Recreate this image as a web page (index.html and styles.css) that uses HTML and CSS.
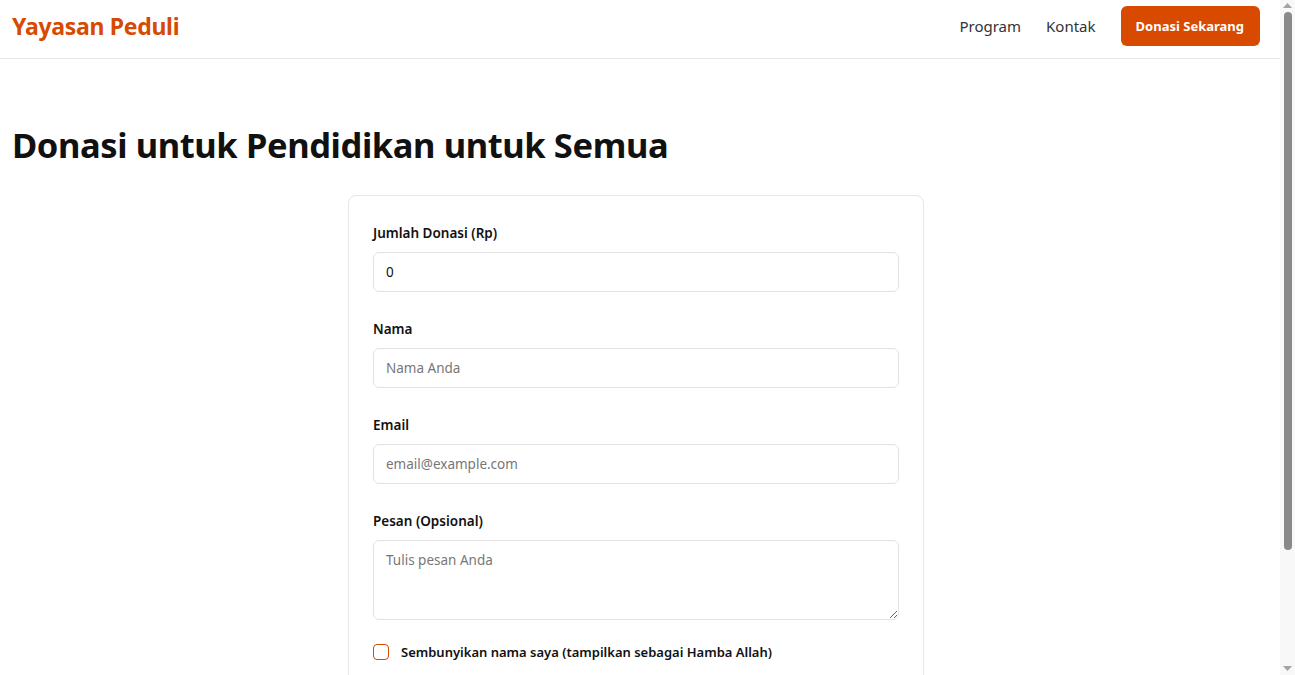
FILE: index.html
```html
<!DOCTYPE html>
<html lang="id">
<head>
<meta charset="utf-8">
<title>Yayasan Peduli - Donasi</title>
<link rel="stylesheet" href="styles.css">
</head>
<body>
<div class="page">
  <header class="site-header">
    <a class="brand" href="#">Yayasan Peduli</a>
    <nav class="nav">
      <a class="nav-link" href="#">Program</a>
      <a class="nav-link" href="#">Kontak</a>
      <a class="btn-primary" href="#">Donasi Sekarang</a>
    </nav>
  </header>
  <main class="main">
    <h1 class="page-title">Donasi untuk Pendidikan untuk Semua</h1>
    <form class="card">
      <div class="field">
        <label class="label" for="amount">Jumlah Donasi (Rp)</label>
        <input class="input" id="amount" type="text" value="0">
      </div>
      <div class="field">
        <label class="label" for="name">Nama</label>
        <input class="input" id="name" type="text" placeholder="Nama Anda">
      </div>
      <div class="field">
        <label class="label" for="email">Email</label>
        <input class="input" id="email" type="email" placeholder="email@example.com">
      </div>
      <div class="field">
        <label class="label" for="msg">Pesan (Opsional)</label>
        <textarea class="input textarea" id="msg" placeholder="Tulis pesan Anda"></textarea>
      </div>
      <label class="check">
        <input type="checkbox" class="checkbox">
        <span>Sembunyikan nama saya (tampilkan sebagai Hamba Allah)</span>
      </label>
    </form>
  </main>
</div>
<div class="scrollbar" aria-hidden="true">
  <svg class="arrow arrow-up" width="9" height="5" viewBox="0 0 9 5"><path d="M0 5 L4.5 0 L9 5 Z" fill="#a3a3a3"/></svg>
  <div class="thumb"></div>
  <svg class="arrow arrow-down" width="9" height="5" viewBox="0 0 9 5"><path d="M0 0 L4.5 5 L9 0 Z" fill="#a3a3a3"/></svg>
</div>
</body>
</html>
```
FILE: styles.css
```css
* { box-sizing: border-box; }
html, body { margin: 0; padding: 0; }
body {
  font-family: "Noto Sans", "Open Sans", sans-serif;
  color: #111;
  background: #fff;
}
.page {
  width: 1280px;
}
.site-header {
  height: 59px;
  border-bottom: 1px solid #e5e5e5;
  display: flex;
  align-items: center;
  justify-content: space-between;
  padding: 6px 20px 12px 12px;
}
.brand {
  color: #d84a00;
  font-weight: 700;
  font-size: 23px;
  text-decoration: none;
  letter-spacing: -0.3px;
}
.nav {
  display: flex;
  align-items: center;
}
.nav-link {
  color: #333;
  text-decoration: none;
  font-size: 15px;
  margin-right: 25px;
}
.nav-link:last-of-type { margin-right: 24px; }
.btn-primary {
  display: inline-flex;
  align-items: center;
  justify-content: center;
  background: #d84a00;
  color: #fff;
  font-weight: 700;
  font-size: 13px;
  text-decoration: none;
  height: 40px;
  padding: 0 16px 0 15px;
  border-radius: 6px;
  border: none;
  font-family: inherit;
}
.main {
  padding: 64px 20px 40px 12px;
}
.page-title {
  font-size: 34.5px;
  font-weight: 700;
  margin: 0 0 28px;
  letter-spacing: -0.4px;
  line-height: 44px;
  color: #111;
}
.card {
  width: 576px;
  margin: 0 auto;
  border: 1px solid #e5e7eb;
  border-radius: 8px;
  padding: 27px 24px 32px;
}
.field {
  display: flex;
  flex-direction: column;
  margin-bottom: 27px;
}
.label {
  font-size: 13.5px;
  font-weight: 600;
  line-height: 20px;
  margin-bottom: 9px;
  color: #111;
}
.input {
  height: 40px;
  border: 1px solid #e2e2e2;
  border-radius: 6px;
  padding: 0 12px;
  font-family: inherit;
  font-size: 13.5px;
  color: #111;
  background: #fff;
}
.input::placeholder { color: #777; }
.textarea {
  height: 80px;
  padding: 10px 12px;
  resize: vertical;
}
.check {
  display: flex;
  align-items: center;
  gap: 12px;
  font-size: 13px;
  font-weight: 600;
  margin-top: -4px;
}
.checkbox {
  appearance: none;
  width: 16px;
  height: 16px;
  margin: 0;
  border: 1.5px solid #d84a00;
  border-radius: 4px;
  background: #fff;
  flex: none;
}

.scrollbar {
  position: fixed;
  top: 0;
  right: 0;
  width: 15px;
  height: 100vh;
  background: #f8f8f8;
  display: flex;
  flex-direction: column;
  align-items: center;
}
.arrow { flex: none; }
.arrow-up { margin-top: 3px; }
.thumb {
  width: 8px;
  height: 538px;
  margin-top: 4px;
  background: #8a8a8a;
  border-radius: 4px;
}
.arrow-down {
  margin-top: auto;
  margin-bottom: 4px;
}
```
